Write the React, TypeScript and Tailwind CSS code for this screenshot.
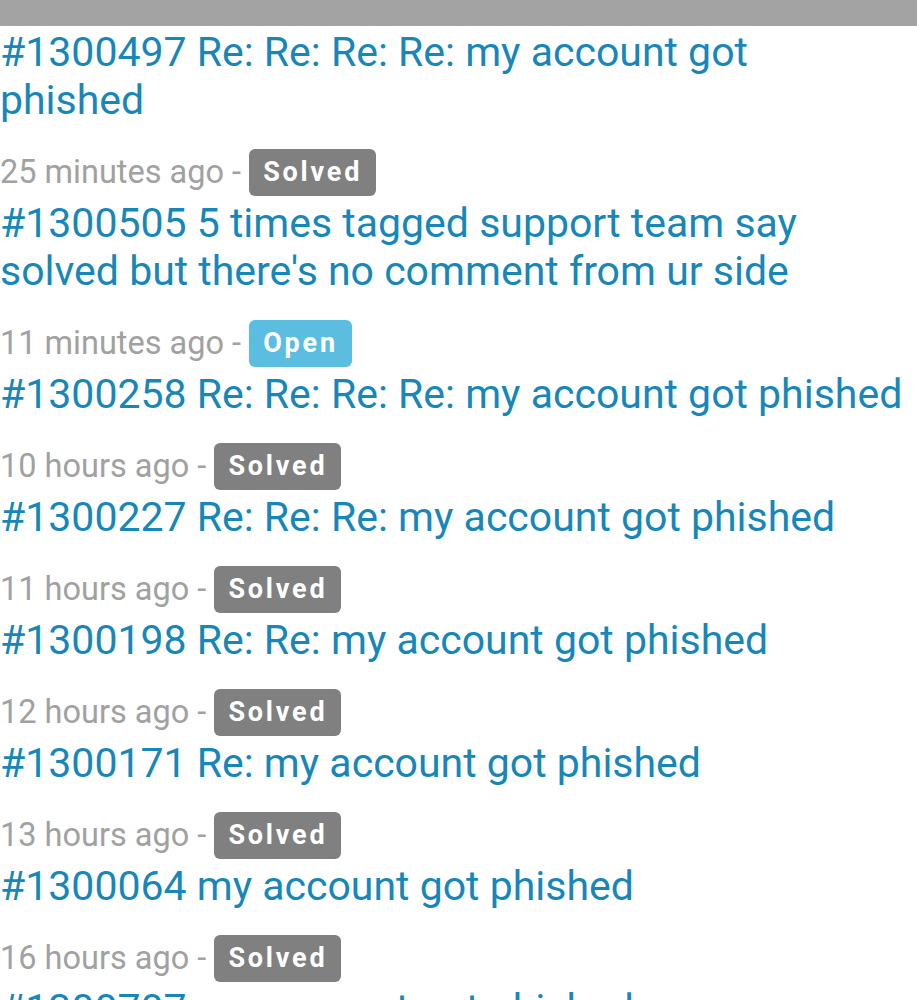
import React from "react"

type Ticket = {
  id: number
  subject: string
  tail?: string
  ago: string
  status: "Solved" | "Open"
}

const tickets: Ticket[] = [
  { id: 1300497, subject: "Re: Re: Re: Re: my account got", tail: "phished", ago: "25 minutes ago", status: "Solved" },
  { id: 1300505, subject: "5 times tagged support team say solved but there's no comment from ur side", ago: "11 minutes ago", status: "Open" },
  { id: 1300258, subject: "Re: Re: Re: Re: my account got phished", ago: "10 hours ago", status: "Solved" },
  { id: 1300227, subject: "Re: Re: Re: my account got phished", ago: "11 hours ago", status: "Solved" },
  { id: 1300198, subject: "Re: Re: my account got phished", ago: "12 hours ago", status: "Solved" },
  { id: 1300171, subject: "Re: my account got phished", ago: "13 hours ago", status: "Solved" },
  { id: 1300064, subject: "my account got phished", ago: "16 hours ago", status: "Solved" },
  { id: 1300707, subject: "my account got phished", ago: "17 hours ago", status: "Solved" },
]

export default function App() {
  return (
    <div className="h-[1000px] overflow-hidden bg-white font-['Roboto',sans-serif]">
      {/* top bar */}
      <div className="h-[26px] bg-[#a3a3a3]" />

      <div className="pt-[2px]">
        {tickets.map((t) => (
          <div key={t.id} className="mb-[3px]">
            <a className="block text-[41px] leading-[48px] text-[#1787b9]">
              #{t.id} {t.subject}
              {t.tail && (
                <>
                  <br />
                  {t.tail}
                </>
              )}
            </a>
            <div className="mt-[24px] flex h-[48px] items-center text-[32.5px] text-[#a1a1a1]">
              <span>{t.ago} -&nbsp;</span>
              <span
                className={`flex h-[47px] items-center rounded-[6px] px-[14px] text-[27px] font-bold tracking-[2.8px] text-white ${
                  t.status === "Open" ? "bg-[#5bbde0]" : "bg-[#808080]"
                }`}
              >
                {t.status}
              </span>
            </div>
          </div>
        ))}
      </div>
    </div>
  )
}
